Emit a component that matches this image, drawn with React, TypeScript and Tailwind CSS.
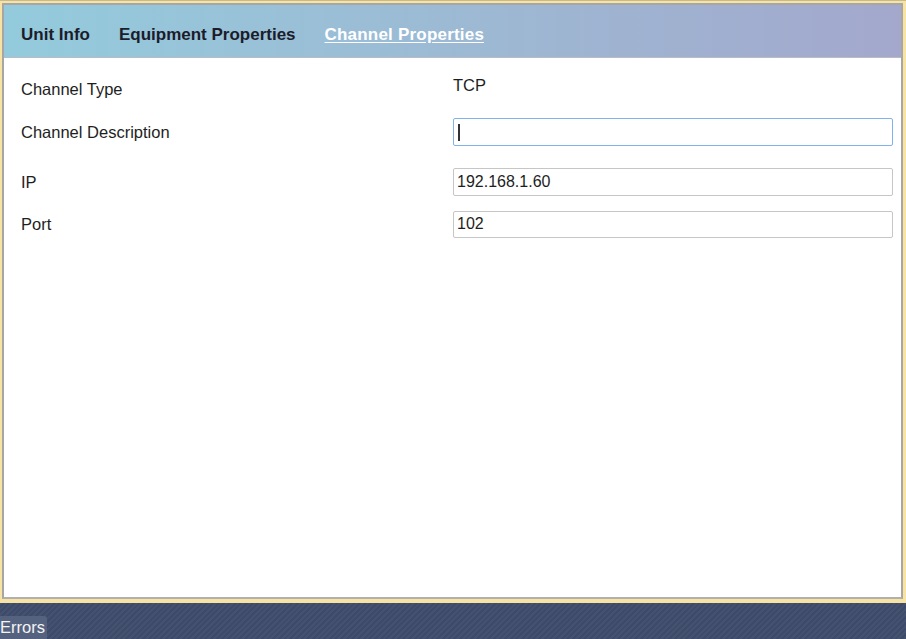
import React from "react";

export default function App() {
  const font = { fontFamily: '"Liberation Sans", Arial, sans-serif' };
  return (
    <div
      className="w-[906px] h-[639px] flex flex-col overflow-hidden bg-[repeating-linear-gradient(135deg,#3d4a69_0px,#3d4a69_2px,#45526f_2px,#45526f_4px)]"
      style={font}
    >
      {/* Main panel with yellow frame */}
      <div className="h-[603px] flex flex-col bg-[#f7e3a2] border-t border-t-[#c9b98e] pt-[2px] pl-[2px] pr-[3px] pb-[4px]">
        <div className="flex-1 flex flex-col border-2 border-[#a6a6a6] border-b-[#b0b0b0] bg-white">
          {/* Header tabs */}
          <div className="h-[53px] flex items-center gap-[29px] pl-[17px] pt-[6px] bg-gradient-to-r from-[#93cbdc] to-[#a3a8cc] border-b border-[#b9bcc6]">
            <span className="text-[17px] font-bold text-[#1c1c2a] leading-none">Unit Info</span>
            <span className="text-[17px] font-bold text-[#1c1c2a] leading-none">Equipment Properties</span>
            <span className="text-[17px] font-bold text-white underline underline-offset-2 leading-none tracking-[0.2px]">
              Channel Properties
            </span>
          </div>

          {/* Content */}
          <div className="flex-1 flex flex-col pt-[14px] pl-[17px] text-[16.5px] text-[#1e1e1e]">
            <div className="flex items-center h-[34px]">
              <div className="w-[432px]">Channel Type</div>
              <div className="mb-[8px]">TCP</div>
            </div>
            <div className="flex items-center h-[28px] mt-[12px]">
              <div className="w-[432px]">Channel Description</div>
              <div className="w-[440px] h-[28px] border border-[#7fb3ea] rounded-[2px] flex items-center pl-[4px]">
                <div className="w-[2px] h-[17px] bg-[#333]" />
              </div>
            </div>
            <div className="flex items-center h-[28px] mt-[22px]">
              <div className="w-[432px]">IP</div>
              <div className="w-[440px] h-[28px] border border-[#c6c6c6] rounded-[2px] flex items-center pl-[3px] text-[16px]">
                192.168.1.60
              </div>
            </div>
            <div className="flex items-center h-[28px] mt-[14px]">
              <div className="w-[432px]">Port</div>
              <div className="w-[440px] h-[27px] border border-[#c6c6c6] rounded-[2px] flex items-center pl-[3px] text-[16px]">
                102
              </div>
            </div>
          </div>
        </div>
      </div>

      {/* Bottom bar */}
      <div className="flex-1 flex items-end">
        <div className="h-[23px] w-[47px] bg-[#55627f] rounded-tr-[3px] flex items-center text-[16.5px] text-[#f4f4f4] leading-none">
          Errors
        </div>
      </div>
    </div>
  );
}
